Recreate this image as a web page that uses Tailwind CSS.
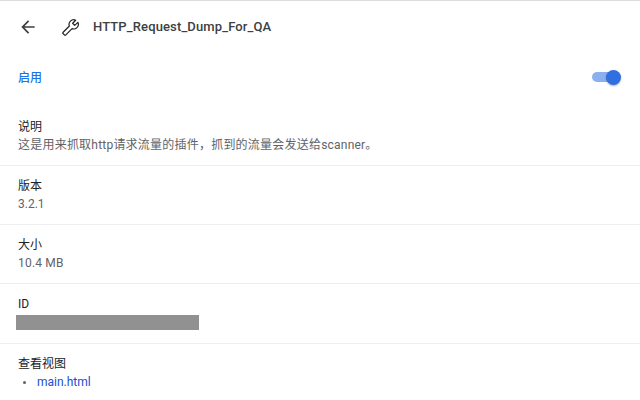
<!DOCTYPE html>
<html lang="zh">
<head>
<meta charset="utf-8">
<script src="https://cdn.jsdelivr.net/npm/@tailwindcss/browser@4"></script>
</head>
<body class="h-[400px] w-[640px] overflow-hidden bg-white font-['Roboto','Noto_Sans_CJK_SC',sans-serif] text-[12px] leading-[18px] text-[#202124]">
    <div class="h-px bg-[#dadce0]"></div>
    <header class="flex h-[52px] items-center pl-[18px]">
        <svg class="h-[20px] w-[20px] text-[#3c4043]" viewBox="0 0 24 24" fill="currentColor"><path d="M20 11H7.83l5.59-5.59L12 4l-8 8 8 8 1.41-1.41L7.83 13H20v-2z"/></svg>
        <svg class="ml-[24px] h-[17px] w-[17px] text-[#202124]" viewBox="0 0 24 24" fill="none" stroke="currentColor" stroke-width="1.7" stroke-linejoin="round"><path transform="matrix(-1 0 0 1 24 0)" d="M22.7 19l-9.1-9.1c.9-2.3.4-5-1.5-6.9-2-2-5-2.4-7.4-1.3L9 6 6 9 1.6 4.7C.4 7.1.9 10.1 2.9 12.1c1.9 1.9 4.6 2.4 6.9 1.5l9.1 9.1c.4.4 1 .4 1.4 0l2.3-2.3c.5-.4.5-1.1.1-1.4z"/></svg>
        <h1 class="ml-[14px] text-[13px] font-medium tracking-[0.13px] text-[#3c4043]">HTTP_Request_Dump_For_QA</h1>
    </header>
    <div class="flex h-[50px] items-center justify-between pl-[18px] pr-[20px]">
        <span class="font-medium text-[#1a73e8]">启用</span>
        <span class="relative mb-[2px] block h-[10px] w-[28px] rounded-full bg-[#8ab0f0]">
            <span class="absolute right-[-1px] top-[-2px] h-[15px] w-[15px] rounded-full bg-[#2f6fe0] shadow-[0_1px_2px_rgba(0,0,0,0.3)]"></span>
        </span>
    </div>
    <section class="h-[63px] border-b border-[#eeeeee] pl-[18px] pt-[15px]">
        <div>说明</div>
        <div class="tracking-[0.22px] text-[#5f6368]">这是用来抓取http请求流量的插件，抓到的流量会发送给scanner。</div>
    </section>
    <section class="h-[59px] border-b border-[#eeeeee] pl-[18px] pt-[11px]">
        <div>版本</div>
        <div class="text-[#5f6368]">3.2.1</div>
    </section>
    <section class="h-[59px] border-b border-[#eeeeee] pl-[18px] pt-[11px]">
        <div>大小</div>
        <div class="tracking-[0.2px] text-[#5f6368]">10.4 MB</div>
    </section>
    <section class="h-[60px] border-b border-[#eeeeee] pl-[16px] pt-[11px]">
        <div class="pl-[2px]">ID</div>
        <div class="mt-[2px] h-[15px] w-[183px] bg-[#919191]"></div>
    </section>
    <section class="pl-[18px] pt-[11px]">
        <div>查看视图</div>
        <ul class="flex items-center">
            <li class="ml-[5px] h-[3px] w-[3px] rounded-full bg-[#5f6368]"></li>
            <li class="ml-[11px]"><a class="text-[#1a4fd0]" href="#">main.html</a></li>
        </ul>
    </section>
</body>
</html>
